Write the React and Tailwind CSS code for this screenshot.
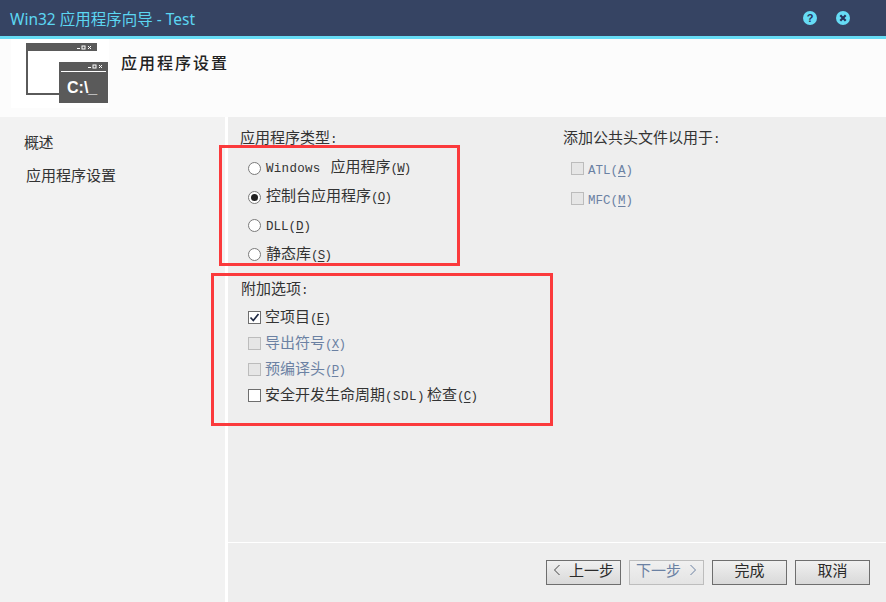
import React from 'react';

function Lat({ children, u }) {
  return (
    <span className="font-['Liberation_Mono',monospace] text-[12.5px]">
      {children}
      {u && (
        <span className={children ? '' : 'tracking-[-0.8px]'}>
          (<span className="underline underline-offset-2">{u}</span>)
        </span>
      )}
    </span>
  );
}

function Radio({ checked }) {
  return (
    <span className="flex h-[13px] w-[13px] shrink-0 items-center justify-center rounded-full border border-[#7a7a7a] bg-white">
      {checked && <span className="h-[7px] w-[7px] rounded-full bg-[#222222]" />}
    </span>
  );
}

function Check({ checked, disabled }) {
  return (
    <span
      className={`flex h-[13px] w-[13px] shrink-0 items-center justify-center border ${
        disabled ? 'border-[#bcbcbc] bg-[#e6e6e6]' : 'border-[#6e6e6e] bg-white'
      }`}
    >
      {checked && (
        <svg width="11" height="11" viewBox="0 0 11 11" fill="none">
          <path d="M1.5 5.5 L4.3 8.5 L9.5 2" stroke="#1f2a44" strokeWidth="1.7" />
        </svg>
      )}
    </span>
  );
}

function RadioRow({ checked, children }) {
  return (
    <div className="flex h-[28.8px] items-center gap-[5px] pl-[7px]">
      <Radio checked={checked} />
      <span className="whitespace-nowrap pb-[1px]">{children}</span>
    </div>
  );
}

function CheckRow({ checked, disabled, children }) {
  return (
    <div className={`flex h-[26px] items-center gap-[4px] pl-[7px] ${disabled ? 'text-[#6b81a3]' : ''}`}>
      <Check checked={checked} disabled={disabled} />
      <span className="whitespace-nowrap">{children}</span>
    </div>
  );
}

function WizardIcon() {
  return (
    <svg width="98" height="69" viewBox="0 0 98 69" className="block">
      <rect x="0" y="0" width="98" height="69" fill="#ffffff" />
      <rect x="15" y="4" width="71" height="52" fill="#ffffff" />
      <rect x="15" y="4" width="71" height="8" fill="#5a5a5a" />
      <rect x="15" y="4" width="2" height="52" fill="#5a5a5a" />
      <rect x="15" y="54" width="50" height="2" fill="#5a5a5a" />
      <rect x="66" y="9" width="3" height="1" fill="#ffffff" />
      <rect x="71" y="7" width="3" height="3" fill="none" stroke="#ffffff" />
      <path d="M77 7 L80 10 M80 7 L77 10" stroke="#ffffff" />
      <rect x="48" y="23" width="49" height="41" fill="#5a5a5a" />
      <rect x="50" y="32" width="45" height="1" fill="#ffffff" />
      <rect x="77" y="28" width="3" height="1" fill="#ffffff" />
      <rect x="82" y="26" width="3" height="3" fill="none" stroke="#ffffff" />
      <path d="M88 26 L91 29 M91 26 L88 29" stroke="#ffffff" />
      <text x="56" y="54" fill="#ffffff" fontSize="16" fontWeight="700" fontFamily="'Liberation Sans', sans-serif">C:\_</text>
    </svg>
  );
}

function WizardButton({ disabled, children }) {
  return (
    <button
      className={`flex h-[25px] w-[75px] items-center justify-center border pb-[5px] text-[15px] bg-gradient-to-b from-[#f0f0f0] to-[#d9d9d9] ${
        disabled ? 'border-[#bdbdbd] text-[#6b81a3] from-[#eeeeee] to-[#e4e4e4]' : 'border-[#6e6e6e] text-[#2b2b2b]'
      }`}
    >
      {children}
    </button>
  );
}

export default function App() {
  return (
    <div className="relative flex h-[602px] w-[886px] flex-col overflow-hidden bg-[#eeeeee] text-[15px] leading-[20px] text-[#333333] font-['Noto_Sans_CJK_SC',sans-serif]">
      {/* title bar */}
      <div className="flex h-[39px] shrink-0 items-center justify-between border-b-[3px] border-[#66dcf5] bg-[#364463] pl-[10px] pr-[36px]">
        <span className="pt-[2px] font-['Noto_Sans','Noto_Sans_CJK_SC',sans-serif] text-[15.5px] text-[#5cd6f2]">Win32 应用程序向导 - Test</span>
        <div className="flex items-center gap-[19px]">
          <svg width="14" height="14" viewBox="0 0 14 14">
            <circle cx="7" cy="7" r="7" fill="#66dcf5" />
            <text x="7" y="11" textAnchor="middle" fontSize="11" fontWeight="700" fill="#26335a" fontFamily="'Liberation Sans', sans-serif">?</text>
          </svg>
          <svg width="14" height="14" viewBox="0 0 14 14">
            <circle cx="7" cy="7" r="7" fill="#66dcf5" />
            <path d="M4.3 4.3 L9.7 9.7 M9.7 4.3 L4.3 9.7" stroke="#26335a" strokeWidth="2.2" />
          </svg>
        </div>
      </div>

      {/* header */}
      <div className="flex h-[78px] shrink-0 bg-[#fcfcfc] pl-[11px]">
        <WizardIcon />
        <span className="ml-[12px] mt-[13px] text-[16px] font-medium tracking-[2px] text-[#222222]">应用程序设置</span>
      </div>

      <div className="flex min-h-0 flex-1">
        {/* sidebar */}
        <div className="flex w-[228px] shrink-0 flex-col border-r-[3px] border-white bg-[#f2f2f2] pl-[24px] pt-[15px]">
          <div className="h-[33px] tracking-[-0.5px]">概述</div>
          <div className="pl-[2px]">应用程序设置</div>
        </div>

        <div className="flex min-w-0 flex-1 flex-col">
          <div className="flex flex-1 pt-[10px]">
            <div className="w-[322px] shrink-0 pl-[13px]">
              <div className="-ml-[1px] h-[27px]">应用程序类型<Lat>:</Lat></div>
              <RadioRow><span className="mr-[2px] tracking-[0.3px]"><Lat>Windows </Lat></span> 应用程序<Lat u="W" /></RadioRow>
              <RadioRow checked>控制台应用程序<Lat u="O" /></RadioRow>
              <RadioRow><Lat u="D">DLL</Lat></RadioRow>
              <RadioRow>静态库<Lat u="S" /></RadioRow>
              <div className="mt-[9px] h-[19px]">附加选项<Lat>:</Lat></div>
              <div className="mt-[7px]">
                <CheckRow checked>空项目<Lat u="E" /></CheckRow>
                <CheckRow disabled>导出符号<Lat u="X" /></CheckRow>
                <CheckRow disabled>预编译头<Lat u="P" /></CheckRow>
                <CheckRow>安全开发生命周期<span className="mr-[2px] tracking-[0.5px]"><Lat>(SDL)</Lat></span>检查<Lat u="C" /></CheckRow>
              </div>
            </div>
            <div className="pl-[13px]">
              <div className="h-[26px]">添加公共头文件以用于<Lat>:</Lat></div>
              <div className="pl-[8px] text-[#6b81a3]">
                <div className="flex h-[30px] items-center gap-[4px]">
                  <Check disabled />
                  <span className="pt-[2px]"><Lat u="A">ATL</Lat></span>
                </div>
                <div className="flex h-[30px] items-center gap-[4px]">
                  <Check disabled />
                  <span className="pt-[2px]"><Lat u="M">MFC</Lat></span>
                </div>
              </div>
            </div>
          </div>

          {/* footer */}
          <div className="flex h-[60px] shrink-0 items-start justify-end gap-[8px] border-t border-white pr-[16px] pt-[17px]">
            <WizardButton>
              <svg width="8" height="12" viewBox="0 0 8 12" fill="none" className="mr-[8px]">
                <path d="M6.5 1 L1.5 6 L6.5 11" stroke="#444444" />
              </svg>
              上一步
            </WizardButton>
            <WizardButton disabled>
              下一步
              <svg width="8" height="12" viewBox="0 0 8 12" fill="none" className="ml-[8px]">
                <path d="M1.5 1 L6.5 6 L1.5 11" stroke="#6b81a3" />
              </svg>
            </WizardButton>
            <WizardButton>完成</WizardButton>
            <WizardButton>取消</WizardButton>
          </div>
        </div>
      </div>

      {/* red annotation boxes over the screenshot */}
      <div className="absolute left-[219px] top-[145px] h-[121px] w-[241px] border-[3px] border-[#fb3a3c]" />
      <div className="absolute left-[211px] top-[273px] h-[153px] w-[342px] border-[3px] border-[#fb3a3c]" />
    </div>
  );
}
